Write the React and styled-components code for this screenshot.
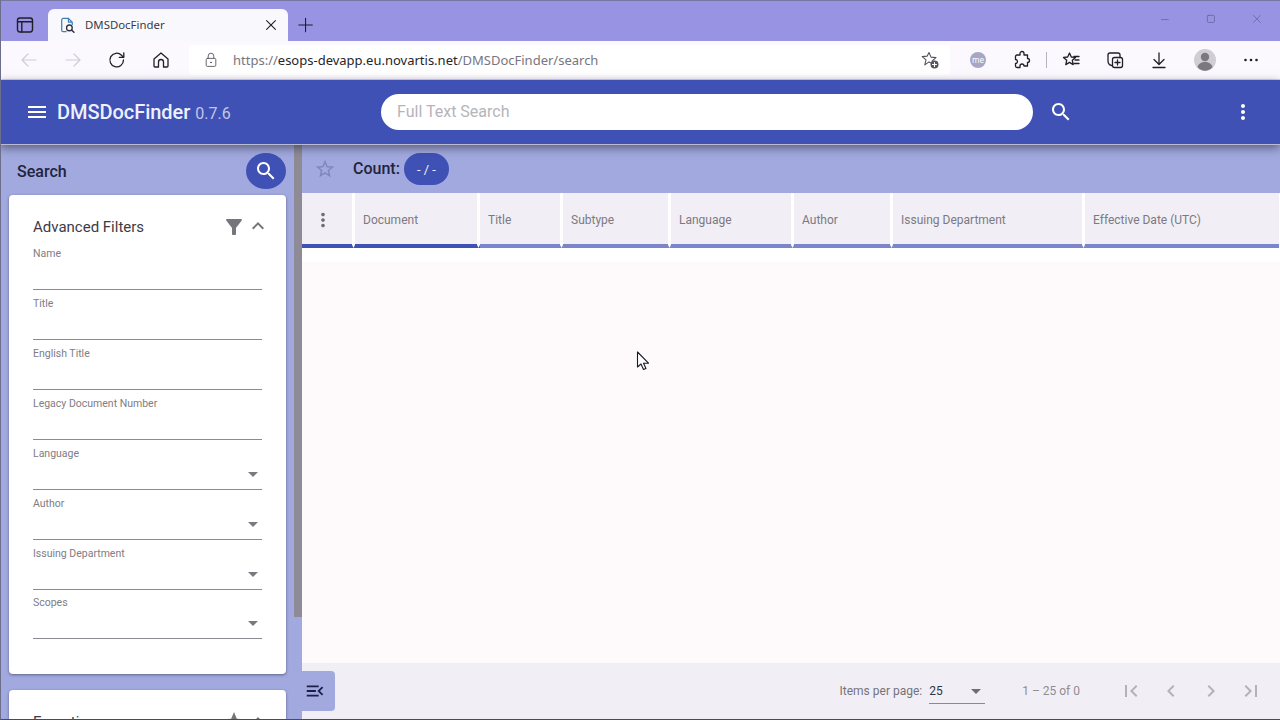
import React from 'react';
import styled, { createGlobalStyle } from 'styled-components';

const INDIGO = '#3f51b5';
const TINT = '#a2a9de';
const PANEL = '#f1eff5';

const PATHS = {
    menu: 'M3 18h18v-2H3v2zm0-5h18v-2H3v2zm0-7v2h18V6H3z',
    search: 'M15.5 14h-.79l-.28-.27C15.41 12.59 16 11.11 16 9.5 16 5.91 13.09 3 9.5 3S3 5.91 3 9.5 5.91 16 9.5 16c1.61 0 3.09-.59 4.23-1.57l.27.28v.79l5 4.99L20.49 19l-4.99-5zm-6 0C7.01 14 5 11.99 5 9.5S7.01 5 9.5 5 14 7.01 14 9.5 11.99 14 9.5 14z',
    kebab: 'M12 8c1.1 0 2-.9 2-2s-.9-2-2-2-2 .9-2 2 .9 2 2 2zm0 2c-1.1 0-2 .9-2 2s.9 2 2 2 2-.9 2-2-.9-2-2-2zm0 6c-1.1 0-2 .9-2 2s.9 2 2 2 2-.9 2-2-.9-2-2-2z',
    star: 'M22 9.24l-7.19-.62L12 2 9.19 8.63 2 9.24l5.46 4.73L5.82 21 12 17.27 18.18 21l-1.63-7.03L22 9.24zM12 15.4l-3.76 2.27 1-4.28-3.32-2.88 4.38-.38L12 6.1l1.71 4.04 4.38.38-3.32 2.88 1 4.28L12 15.4z',
    starFilled: 'M12 17.27L18.18 21l-1.64-7.03L22 9.24l-7.19-.61L12 2 9.19 8.63 2 9.24l5.46 4.73L5.82 21z',
    filter: 'M4.25 5.61C6.27 8.2 10 13 10 13v6c0 .55.45 1 1 1h2c.55 0 1-.45 1-1v-6s3.72-4.8 5.74-7.39c.51-.66.04-1.61-.79-1.61H5.04c-.83 0-1.3.95-.79 1.61z',
    less: 'M12 8l-6 6 1.41 1.41L12 10.83l4.59 4.58L18 14z',
    drop: 'M7 10l5 5 5-5z',
    menuOpen: 'M3 18h13v-2H3v2zm0-5h10v-2H3v2zm0-7v2h13V6H3zm18 9.59L17.42 12 21 8.41 19.59 7l-5 5 5 5L21 15.59z',
    first: 'M18.41 16.59L13.82 12l4.59-4.59L17 6l-6 6 6 6zM6 6h2v12H6z',
    prev: 'M15.41 7.41L14 6l-6 6 6 6 1.41-1.41L10.83 12z',
    next: 'M10 6L8.59 7.41 13.17 12l-4.58 4.58L10 18l6-6z',
    last: 'M5.59 7.41L10.18 12l-4.59 4.59L7 18l6-6-6-6zM16 6h2v12h-2z',
};

const COLUMNS = [
    { label: 'Document', width: 122, active: true },
    { label: 'Title', width: 80 },
    { label: 'Subtype', width: 105 },
    { label: 'Language', width: 120 },
    { label: 'Author', width: 96 },
    { label: 'Issuing Department', width: 189 },
    { label: 'Effective Date (UTC)', width: 194 },
];

const FILTERS = [
    { label: 'Name' },
    { label: 'Title' },
    { label: 'English Title' },
    { label: 'Legacy Document Number' },
    { label: 'Language', select: true },
    { label: 'Author', select: true },
    { label: 'Issuing Department', select: true },
    { label: 'Scopes', select: true, tight: true },
];

const GlobalStyle = createGlobalStyle`
    html, body {
        margin: 0;
        padding: 0;
        height: 720px;
        overflow: hidden;
    }
    body {
        font-family: Roboto, "Liberation Sans", sans-serif;
    }
`;

const Frame = styled.div`
    position: relative;
    width: 1280px;
    height: 720px;
    display: flex;
    flex-direction: column;
    overflow: hidden;
    &::after {
        content: '';
        position: absolute;
        inset: 0;
        border-top: 1px solid #77779f;
        border-left: 1px solid #6d6d8c;
        border-bottom: 1px solid #4b4a55;
        pointer-events: none;
        z-index: 5;
    }
`;

/* browser chrome */
const TabStrip = styled.div`
    height: 41px;
    flex: none;
    background: #9894e3;
    display: flex;
    align-items: flex-end;
    padding-left: 13px;
`;

const StripIcon = styled.div`
    width: 24px;
    height: 32px;
    display: flex;
    align-items: center;
    justify-content: center;
    margin-right: 11px;
`;

const Tab = styled.div`
    width: 240px;
    height: 32px;
    background: #f9f8fd;
    border-radius: 6px 6px 0 0;
    display: flex;
    align-items: center;
    padding: 0 9px 0 10px;
    box-sizing: border-box;
    gap: 8px;
`;

const TabTitle = styled.span`
    flex: 1;
    font-family: "Noto Sans", sans-serif;
    font-size: 11.4px;
    color: #3a3a44;
    margin-top: -1px;
`;

const NewTab = styled.div`
    width: 36px;
    height: 32px;
    display: flex;
    align-items: center;
    justify-content: center;
`;

const WindowButtons = styled.div`
    margin-left: auto;
    margin-right: -2px;
    height: 41px;
    display: flex;
    align-items: center;
`;

const WindowButton = styled.div`
    width: 46px;
    height: 41px;
    display: flex;
    align-items: center;
    justify-content: center;
`;

const Toolbar = styled.div`
    height: 39px;
    flex: none;
    box-sizing: border-box;
    background: #fbf9fd;
    border-bottom: 1px solid #d8d6de;
    display: flex;
    align-items: center;
    padding-left: 7px;
`;

const ToolButton = styled.div`
    width: 44px;
    height: 30px;
    flex: none;
    margin-left: ${p => (p.$nudge ? '2px' : '0')};
    display: flex;
    align-items: center;
    justify-content: center;
`;

const AddressBar = styled.div`
    width: 761px;
    height: 30px;
    margin-left: 6px;
    background: #fff;
    border-radius: 4px;
    display: flex;
    align-items: center;
    padding: 0 10px 0 14px;
    box-sizing: border-box;
    flex: none;
`;

const Url = styled.span`
    flex: 1;
    margin-left: 14px;
    font-family: "Noto Sans", sans-serif;
    font-size: 13px;
    color: #25252b;
    white-space: nowrap;
`;

const UrlScheme = styled.span`
    color: #77757f;
`;

const ToolGroup = styled.div`
    display: flex;
    align-items: center;
    margin-left: 6px;
`;

const ToolDivider = styled.div`
    width: 1px;
    height: 16px;
    background: #b5b3bb;
    margin: 0 2px;
`;

const MeBadge = styled.span`
    width: 16px;
    height: 16px;
    border-radius: 50%;
    background: #a8a6c6;
    color: #fff;
    font-family: "Noto Sans", sans-serif;
    font-size: 8px;
    line-height: 16px;
    text-align: center;
`;

/* application bar */
const AppBar = styled.header`
    position: relative;
    z-index: 2;
    flex: none;
    height: 65px;
    box-sizing: border-box;
    background: ${INDIGO};
    border-bottom: 1px solid #b9bcd0;
    box-shadow: 0 3px 9px rgba(30, 30, 50, 0.55);
    display: flex;
    align-items: center;
    padding: 0 25px 0 25px;
`;

const Brand = styled.div`
    margin-left: 8px;
    width: 324px;
    flex: none;
    display: flex;
    align-items: baseline;
    gap: 5px;
`;

const BrandName = styled.span`
    font-size: 20px;
    font-weight: 500;
    letter-spacing: -0.05px;
    color: #eef0fb;
`;

const BrandVersion = styled.span`
    font-size: 16px;
    color: #c2c6e6;
`;

const SearchBox = styled.div`
    width: 652px;
    height: 36px;
    background: #fff;
    border-radius: 18px;
    flex: none;
    box-sizing: border-box;
    padding: 0 16px 2px;
    display: flex;
    align-items: center;
    font-size: 16px;
    color: #b5b4ba;
`;

const SearchAction = styled.div`
    margin-left: 16px;
    display: flex;
`;

const AppMenu = styled.div`
    margin-left: auto;
    display: flex;
`;

/* page */
const Content = styled.div`
    flex: 1;
    min-height: 0;
    display: flex;
    background: ${TINT};
`;

const Sidebar = styled.aside`
    width: 294px;
    flex: none;
    box-sizing: border-box;
    padding: 0 8px 0 9px;
    overflow: hidden;
`;

const SideHead = styled.div`
    height: 50px;
    display: flex;
    align-items: center;
    justify-content: space-between;
    padding-left: 8px;
`;

const SideTitle = styled.h2`
    margin: 2px 0 0;
    font-size: 16px;
    font-weight: 500;
    color: #23233c;
`;

const RoundButton = styled.div`
    width: 40px;
    height: 36px;
    border-radius: 50%;
    background: ${INDIGO};
    display: flex;
    align-items: center;
    justify-content: center;
    margin-top: 2px;
`;

const Card = styled.section`
    background: #fff;
    border-radius: 4px;
    box-shadow: 0 1px 3px rgba(40, 40, 70, 0.55);
    padding: 18px 24px 28px;
    margin-bottom: 16px;
`;

const CardHead = styled.div`
    height: 28px;
    margin-bottom: 6px;
    display: flex;
    align-items: center;
`;

const CardTitle = styled.h3`
    margin: 0;
    flex: 1;
    font-size: 15px;
    font-weight: 400;
    color: #3e3b46;
`;

const CardIcons = styled.div`
    display: flex;
    align-items: center;
    margin-right: -8px;
`;

const Chevron = styled.div`
    display: flex;
    margin-top: -3px;
`;

const Field = styled.div`
    height: 50px;
    margin-top: ${p => (p.$tight ? '-1px' : '0')};
    display: flex;
    flex-direction: column;
`;

const FieldLabel = styled.label`
    font-size: 10.5px;
    line-height: 14px;
    color: #7f7c85;
`;

const FieldControl = styled.div`
    height: 29px;
    box-sizing: border-box;
    border-bottom: 1px solid #8c8991;
    padding-bottom: 2px;
    display: flex;
    align-items: center;
    justify-content: flex-end;
`;

const DropArrow = styled.div`
    display: flex;
    margin-right: -3px;
`;

const Scrollbar = styled.div`
    width: 8px;
    flex: none;
`;

const ScrollThumb = styled.div`
    height: 472px;
    background: #8e8b96;
`;

const Main = styled.main`
    flex: 1;
    min-width: 0;
    display: flex;
    flex-direction: column;
`;

const MainBar = styled.div`
    height: 48px;
    flex: none;
    display: flex;
    align-items: center;
    padding-left: 12px;
`;

const CountLabel = styled.span`
    margin: -2px 0 0 17px;
    font-size: 16px;
    font-weight: 500;
    color: #23233c;
`;

const CountPill = styled.span`
    margin-left: 4px;
    width: 45px;
    height: 32px;
    border-radius: 16px;
    background: ${INDIGO};
    color: #eef0fb;
    font-size: 13px;
    display: flex;
    align-items: center;
    justify-content: center;
`;

const TableArea = styled.div`
    flex: 1;
    min-height: 0;
    background: #fefafc;
`;

const HeaderRow = styled.div`
    display: flex;
    height: 69px;
    align-items: flex-start;
    background: #fff;
`;

const HeaderCell = styled.div`
    width: ${p => p.$width}px;
    height: 55px;
    flex: none;
    box-sizing: border-box;
    background: ${PANEL};
    border-bottom: 4px solid ${p => (p.$active ? INDIGO : '#7c85c9')};
    padding: ${p => (p.$center ? '3px 8px 0 0' : '3px 0 0 8px')};
    display: flex;
    align-items: center;
    justify-content: ${p => (p.$center ? 'center' : 'flex-start')};
    font-size: 12px;
    color: #7c7982;
    white-space: nowrap;
`;

const HeaderGap = styled.div`
    width: 3px;
    height: 55px;
    flex: none;
    background: linear-gradient(to bottom, transparent 51px, ${p => (p.$active ? INDIGO : '#7c85c9')} 51px);
    position: relative;
    &::before {
        content: '';
        position: absolute;
        inset: 0;
        background: #fff;
        clip-path: polygon(0 0, 100% 0, 100% 94%, 50% 100%, 0 94%);
    }
`;

const Footer = styled.div`
    height: 57px;
    flex: none;
    background: ${PANEL};
    box-sizing: border-box;
    padding: 8px 9px 9px 0;
    display: flex;
    align-items: center;
`;

const DrawerToggle = styled.div`
    width: 33px;
    height: 40px;
    box-sizing: border-box;
    padding-left: 2px;
    background: ${TINT};
    border-radius: 0 4px 4px 0;
    display: flex;
    align-items: center;
`;

const Paginator = styled.div`
    margin-left: auto;
    display: flex;
    align-items: center;
    font-size: 12px;
    color: #75727b;
`;

const PageSize = styled.div`
    width: 56px;
    height: 25px;
    margin-left: 7px;
    box-sizing: border-box;
    border-bottom: 1px solid #8c8991;
    display: flex;
    align-items: center;
    justify-content: space-between;
    color: #35333c;
`;

const PageRange = styled.span`
    margin-left: 37px;
    margin-right: 31px;
    color: #8f8c94;
`;

const PageButton = styled.div`
    width: 40px;
    height: 40px;
    display: flex;
    align-items: center;
    justify-content: center;
`;

const Cursor = styled.svg`
    position: absolute;
    left: 636px;
    top: 351px;
    z-index: 4;
`;

const GlyphSvg = styled.svg`
    display: block;
    flex: none;
`;

const Icon = ({ name, size = 24, color = '#000' }) =>
    <GlyphSvg width={size} height={size} viewBox="0 0 24 24" fill={color}>
        <path d={PATHS[name]} />
    </GlyphSvg>;

// browser chrome icons, stroked by hand
const Line = ({ size = 20, color = '#1f1f26', width = 1.3, children }) =>
    <GlyphSvg width={size} height={size} viewBox="0 0 20 20" fill="none" stroke={color} strokeWidth={width} strokeLinecap="round" strokeLinejoin="round">
        {children}
    </GlyphSvg>;

const FilterField = ({ label, select, tight }) =>
    <Field $tight={tight}>
        <FieldLabel>{label}</FieldLabel>
        <FieldControl>
            {select && <DropArrow><Icon name="drop" color="#7b7880" /></DropArrow>}
        </FieldControl>
    </Field>;

const FilterHead = ({ title, icon }) =>
    <CardHead>
        <CardTitle>{title}</CardTitle>
        <CardIcons>
            <Icon name={icon} color="#77747c" />
            <Chevron><Icon name="less" color="#77747c" /></Chevron>
        </CardIcons>
    </CardHead>;

const App = () =>
    <Frame>
        <GlobalStyle />
        <TabStrip>
            <StripIcon>
                <Line size={20} width={1.4}>
                    <rect x="2.5" y="3" width="15" height="14" rx="2.4" />
                    <path d="M6.8 6.8v10.200M2.500 6.800h15" />
                </Line>
            </StripIcon>
            <Tab>
                <Line size={19} color="#3f7fb8">
                    <path d="M11 2.500H5.500a1.600 1.600 0 0 0-1.600 1.600v10.800a1.600 1.600 0 0 0 1.600 1.600h3" />
                    <path d="M11 2.500l4 4v2.500M11 2.500v4h4" />
                    <circle cx="12" cy="12.500" r="3" stroke="#2c3242" strokeWidth="1.4" />
                    <path d="M14.200 14.700l2.600 2.400" stroke="#2c3242" strokeWidth="1.6" />
                </Line>
                <TabTitle>DMSDocFinder</TabTitle>
                <Line size={16} width={1.4}>
                    <path d="M4.500 4.500l11 11M15.500 4.500l-11 11" />
                </Line>
            </Tab>
            <NewTab>
                <Line size={18} width={1.2}>
                    <path d="M9.500 2.500v15M2 10h15" />
                </Line>
            </NewTab>
            <WindowButtons>
                <WindowButton>
                    <Line size={14} color="#66649f" width={1.1}><path d="M2 8h10" /></Line>
                </WindowButton>
                <WindowButton>
                    <Line size={14} color="#66649f" width={1.1}><rect x="2" y="2" width="10" height="10" rx="1.200" /></Line>
                </WindowButton>
                <WindowButton>
                    <Line size={14} color="#66649f" width={1.1}><path d="M2 2l10 10M12 2L2 12" /></Line>
                </WindowButton>
            </WindowButtons>
        </TabStrip>
        <Toolbar>
            <ToolButton>
                <Line color="#cfcdd5" width={1.2}><path d="M17 10H3M9 4l-6 6 6 6" /></Line>
            </ToolButton>
            <ToolButton>
                <Line color="#cfcdd5" width={1.2}><path d="M3 10h14M11 4l6 6-6 6" /></Line>
            </ToolButton>
            <ToolButton>
                <Line width={1.3}>
                    <path d="M16.500 10a6.800 6.800 0 1 1-2-4.800l2 2" />
                    <path d="M16.800 2.800v4.500h-4.500" />
                </Line>
            </ToolButton>
            <ToolButton>
                <Line width={1.3}>
                    <path d="M3 9l7-6 7 6v7a1 1 0 0 1-1 1h-3.500v-5a2.500 2.500 0 0 0-5 0v5H4a1 1 0 0 1-1-1z" />
                </Line>
            </ToolButton>
            <AddressBar>
                <Line size={16} color="#55535c" width={1.1}>
                    <rect x="4" y="8" width="12" height="10" rx="1.500" />
                    <path d="M6.500 8V5a3.500 3.500 0 0 1 7 0v3" />
                    <circle cx="10" cy="13" r=".6" fill="#55535c" />
                </Line>
                <Url><UrlScheme>https://</UrlScheme>esops-devapp.eu.novartis.net<UrlScheme>/DMSDocFinder/search</UrlScheme></Url>
                <Line size={20} color="#55535c" width={1.1}>
                    <path d="M9 2.500l2 4.600 5 .5-3.800 3.300 1 3-4.200-2-4.200 3 1.200-5-3.800-3.300 5-.5z" />
                    <circle cx="14.500" cy="14.500" r="4" fill="#55535c" stroke="none" />
                    <path d="M14.500 12.500v4M12.500 14.500h4" stroke="#fff" />
                </Line>
            </AddressBar>
            <ToolGroup>
                <ToolButton><MeBadge>me</MeBadge></ToolButton>
                <ToolButton>
                    <Line>
                        <path d="M8 3.500a2 2 0 0 1 4 0V5h3.500v3.500a2 2 0 0 1 0 4V16H12a2 2 0 0 0-4 0v1.500H5a1.500 1.500 0 0 1-1.500-1.500v-2.500a2 2 0 0 0 0-4V6.500A1.500 1.500 0 0 1 5 5h3z" />
                    </Line>
                </ToolButton>
                <ToolDivider />
                <ToolButton>
                    <Line>
                        <path d="M8.500 3l1.800 4 4.200.4-3.200 2.900.9 4.300-3.700-2.200-3.700 2.200.9-4.300L2.500 7.400l4.200-.4z" />
                        <path d="M13 6.500h5M14 10h4M13 13.500h5" />
                    </Line>
                </ToolButton>
                <ToolButton>
                    <Line>
                        <rect x="7.500" y="7.500" width="10" height="10" rx="2" />
                        <path d="M12.500 10v5M10 12.500h5" />
                        <path d="M15 7.500V5a2 2 0 0 0-2-2H5a2 2 0 0 0-2 2v6c0 2 1.500 4 3.500 4.500" />
                    </Line>
                </ToolButton>
                <ToolButton>
                    <Line>
                        <path d="M10 3v11M5 9.500l5 5 5-5M4 17.500h12" />
                    </Line>
                </ToolButton>
                <ToolButton $nudge>
                    <GlyphSvg width="24" height="24" viewBox="0 0 24 24">
                        <circle cx="12" cy="12" r="11" fill="#d0ced3" />
                        <circle cx="12" cy="9" r="4.200" fill="#7b797f" />
                        <path d="M4.500 19c1-3.500 4-5 7.500-5s6.500 1.500 7.500 5c-2 2.500-4.800 3.800-7.500 3.800S6.500 21.500 4.500 19z" fill="#7b797f" />
                    </GlyphSvg>
                </ToolButton>
                <ToolButton $nudge>
                    <GlyphSvg width="20" height="20" viewBox="0 0 20 20" fill="#1f1f26">
                        <circle cx="4.500" cy="10" r="1.300" />
                        <circle cx="10" cy="10" r="1.300" />
                        <circle cx="15.500" cy="10" r="1.300" />
                    </GlyphSvg>
                </ToolButton>
            </ToolGroup>
        </Toolbar>
        <AppBar>
            <Icon name="menu" color="#fff" />
            <Brand>
                <BrandName>DMSDocFinder</BrandName>
                <BrandVersion>0.7.6</BrandVersion>
            </Brand>
            <SearchBox>Full Text Search</SearchBox>
            <SearchAction><Icon name="search" color="#fff" /></SearchAction>
            <AppMenu><Icon name="kebab" color="#fff" /></AppMenu>
        </AppBar>
        <Content>
            <Sidebar>
                <SideHead>
                    <SideTitle>Search</SideTitle>
                    <RoundButton><Icon name="search" color="#fff" /></RoundButton>
                </SideHead>
                <Card>
                    <FilterHead title="Advanced Filters" icon="filter" />
                    {FILTERS.map(f => <FilterField key={f.label} {...f} />)}
                </Card>
                <Card>
                    <FilterHead title="Expertise" icon="starFilled" />
                </Card>
            </Sidebar>
            <Scrollbar><ScrollThumb /></Scrollbar>
            <Main>
                <MainBar>
                    <Icon name="star" size={22} color="#7f86bd" />
                    <CountLabel>Count:</CountLabel>
                    <CountPill>- / -</CountPill>
                </MainBar>
                <TableArea>
                    <HeaderRow>
                        <HeaderCell $width={50} $active $center>
                            <Icon name="kebab" size={22} color="#6f6c75" />
                        </HeaderCell>
                        <HeaderGap $active />
                        {COLUMNS.map((c, i) =>
                            <React.Fragment key={c.label}>
                                <HeaderCell $width={c.width} $active={c.active}>{c.label}</HeaderCell>
                                {i < COLUMNS.length - 1 && <HeaderGap $active={c.active} />}
                            </React.Fragment>
                        )}
                    </HeaderRow>
                </TableArea>
                <Footer>
                    <DrawerToggle><Icon name="menuOpen" size={22} color="#1c1f4a" /></DrawerToggle>
                    <Paginator>
                        Items per page:
                        <PageSize>
                            25
                            <DropArrow><Icon name="drop" color="#6f6c75" /></DropArrow>
                        </PageSize>
                        <PageRange>1 – 25 of 0</PageRange>
                        <PageButton><Icon name="first" color="#b4b2b9" /></PageButton>
                        <PageButton><Icon name="prev" color="#b4b2b9" /></PageButton>
                        <PageButton><Icon name="next" color="#b4b2b9" /></PageButton>
                        <PageButton><Icon name="last" color="#b4b2b9" /></PageButton>
                    </Paginator>
                </Footer>
            </Main>
        </Content>
        <Cursor width="14" height="21" viewBox="0 0 14 21">
            <path d="M1.500 1v15l3.500-3 2.500 5.500 2.500-1-2.500-5.300H12.500z" fill="#fff" stroke="#1a1a22" strokeWidth="1.100" strokeLinejoin="round" />
        </Cursor>
    </Frame>;

export default App;
